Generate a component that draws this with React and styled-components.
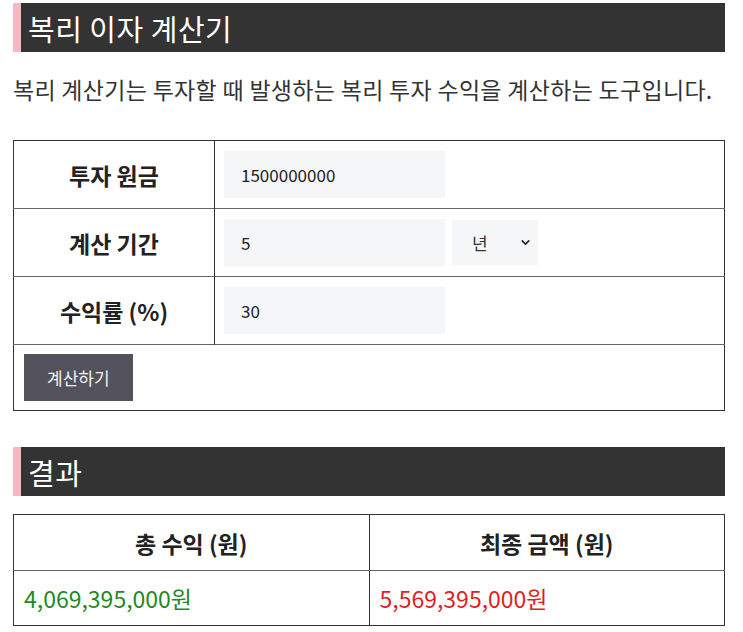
import styled, { createGlobalStyle } from "styled-components";
import { ChevronDown } from "lucide-react";

const GlobalStyle = createGlobalStyle`
  body {
    margin: 0;
    background: #fff;
    font-family: "Noto Sans CJK KR", "Noto Sans", sans-serif;
    color: #333;
  }
`;

const Page = styled.div`
  width: 712px;
  padding: 3px 18px 0 13px;
`;

const SectionTitle = styled.h2`
  margin: 0;
  height: 49px;
  display: flex;
  align-items: center;
  padding-left: 7px;
  border-left: 8px solid #f7b8c4;
  background-color: #333;
  color: #fff;
  font-size: 29px;
  font-weight: 400;
  letter-spacing: 0.5px;
  margin-top: ${(props) => props.gap || 0}px;
`;

const Intro = styled.p`
  margin: 22px 0 0;
  font-size: 23px;
  letter-spacing: 0.3px;
  line-height: 30px;
  color: #333;
`;

const FormTable = styled.table`
  width: 100%;
  margin-top: ${(props) => props.gap}px;
  border-collapse: collapse;
  border: 1px solid #333;
`;

const Row = styled.tr`
  border-bottom: 1px solid #666;
`;

const Label = styled.th`
  width: 180px;
  height: 47px;
  padding: 10px;
  border-right: 1px solid #333;
  font-size: 23px;
  font-weight: 700;
  color: #222;
  text-align: center;
`;

const Field = styled.td`
  padding: 10px 9px;
`;

const FieldGroup = styled.div`
  display: flex;
  align-items: center;
  gap: 7px;
`;

const TextInput = styled.input`
  box-sizing: border-box;
  width: 221px;
  height: 47px;
  padding: 0 17px;
  border: none;
  outline: none;
  background-color: #f5f6f7;
  font-family: "Noto Sans CJK KR", "Noto Sans", sans-serif;
  font-size: 17px;
  color: #222;
`;

const SelectWrap = styled.div`
  position: relative;
  width: 86px;
  height: 45px;
`;

const Select = styled.select`
  appearance: none;
  width: 100%;
  height: 100%;
  padding: 0 20px;
  border: none;
  outline: none;
  background-color: #f5f6f7;
  font-family: "Noto Sans CJK KR", "Noto Sans", sans-serif;
  font-size: 17px;
  color: #333;
`;

const SelectArrow = styled(ChevronDown)`
  position: absolute;
  right: 6px;
  top: 16px;
  pointer-events: none;
  color: #222;
`;

const ButtonCell = styled.td`
  padding: 9px 10px;
`;

const Button = styled.button`
  height: 47px;
  padding: 0 23px;
  border: none;
  background-color: #53525d;
  color: #f2f2f2;
  font-family: "Noto Sans CJK KR", "Noto Sans", sans-serif;
  font-size: 17px;
`;

const ResultTable = styled.table`
  width: 100%;
  margin-top: 18px;
  border-collapse: collapse;
  border: 1px solid #333;
  table-layout: fixed;
`;

const HeadCell = styled.th`
  height: 55px;
  padding: 0 10px;
  border: 1px solid #333;
  border-bottom-color: #666;
  font-size: 23px;
  font-weight: 700;
  color: #222;
  text-align: center;
`;

const ValueCell = styled.td`
  height: 54px;
  padding: 0 10px;
  border: 1px solid #333;
  font-size: 23px;
  color: ${(props) => props.tone};
`;

const App = () => {
  return (
    <Page>
      <GlobalStyle />
      <SectionTitle>복리 이자 계산기</SectionTitle>
      <Intro>복리 계산기는 투자할 때 발생하는 복리 투자 수익을 계산하는 도구입니다.</Intro>

      <FormTable gap={36}>
        <tbody>
          <Row>
            <Label>투자 원금</Label>
            <Field>
              <TextInput type="text" defaultValue="1500000000" />
            </Field>
          </Row>
          <Row>
            <Label>계산 기간</Label>
            <Field>
              <FieldGroup>
                <TextInput type="text" defaultValue="5" />
                <SelectWrap>
                  <Select defaultValue="year">
                    <option value="year">년</option>
                    <option value="month">월</option>
                  </Select>
                  <SelectArrow size={13} strokeWidth={3} />
                </SelectWrap>
              </FieldGroup>
            </Field>
          </Row>
          <Row>
            <Label>수익률 (%)</Label>
            <Field>
              <TextInput type="text" defaultValue="30" />
            </Field>
          </Row>
          <tr>
            <ButtonCell colSpan={2}>
              <Button type="button">계산하기</Button>
            </ButtonCell>
          </tr>
        </tbody>
      </FormTable>

      <SectionTitle gap={36}>결과</SectionTitle>

      <ResultTable>
        <thead>
          <tr>
            <HeadCell>총 수익 (원)</HeadCell>
            <HeadCell>최종 금액 (원)</HeadCell>
          </tr>
        </thead>
        <tbody>
          <tr>
            <ValueCell tone="#1f8a1f">4,069,395,000원</ValueCell>
            <ValueCell tone="#e01e1e">5,569,395,000원</ValueCell>
          </tr>
        </tbody>
      </ResultTable>
    </Page>
  );
};

export default App;
